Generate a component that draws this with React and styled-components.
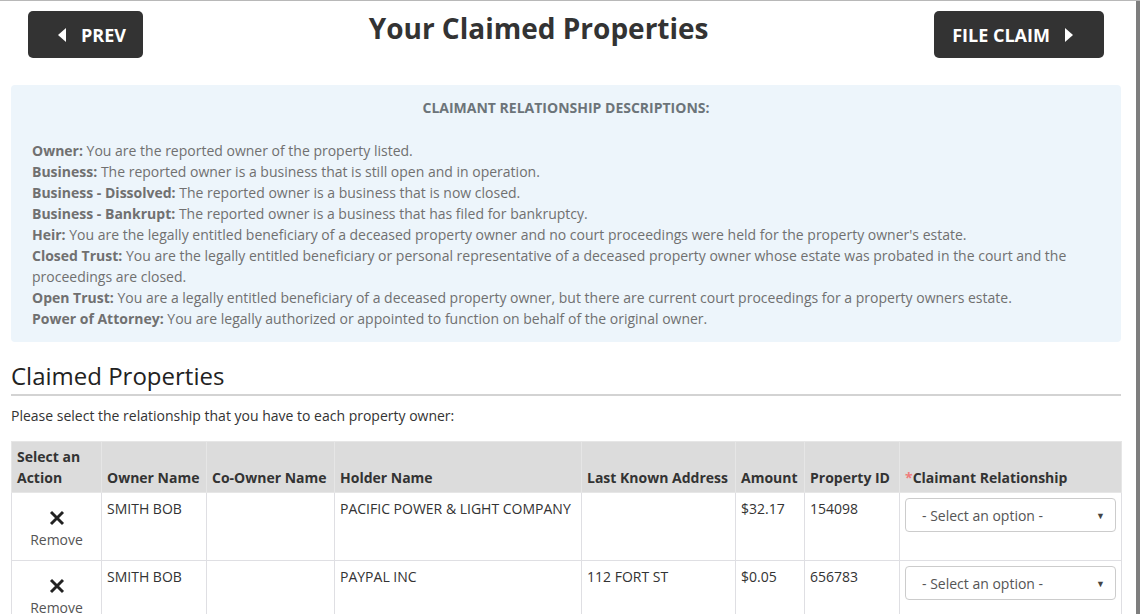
import styled, { createGlobalStyle } from "styled-components";

const GlobalStyle = createGlobalStyle`
  html, body {
    margin: 0;
    padding: 0;
    overflow: hidden;
    background: #fff;
  }
  body {
    font-family: "Open Sans", "Liberation Sans", sans-serif;
    font-size: 14px;
    line-height: 21px;
    color: #333;
  }
`;

const descriptions = [
  ["Owner:", "You are the reported owner of the property listed."],
  ["Business:", "The reported owner is a business that is still open and in operation."],
  ["Business - Dissolved:", "The reported owner is a business that is now closed."],
  ["Business - Bankrupt:", "The reported owner is a business that has filed for bankruptcy."],
  ["Heir:", "You are the legally entitled beneficiary of a deceased property owner and no court proceedings were held for the property owner's estate."],
  ["Closed Trust:", "You are the legally entitled beneficiary or personal representative of a deceased property owner whose estate was probated in the court and the proceedings are closed."],
  ["Open Trust:", "You are a legally entitled beneficiary of a deceased property owner, but there are current court proceedings for a property owners estate."],
  ["Power of Attorney:", "You are legally authorized or appointed to function on behalf of the original owner."],
];

const properties = [
  { owner: "SMITH BOB", coOwner: "", holder: "PACIFIC POWER & LIGHT COMPANY", address: "", amount: "$32.17", id: "154098" },
  { owner: "SMITH BOB", coOwner: "", holder: "PAYPAL INC", address: "112 FORT ST", amount: "$0.05", id: "656783" },
];

const columns = [
  { label: "Select an Action", width: 90 },
  { label: "Owner Name", width: 105 },
  { label: "Co-Owner Name", width: 128 },
  { label: "Holder Name", width: 247 },
  { label: "Last Known Address", width: 154 },
  { label: "Amount", width: 69 },
  { label: "Property ID", width: 95 },
  { label: "Claimant Relationship", width: 222, required: true },
];

function Caret({ dir }) {
  return (
    <svg width="8" height="14" viewBox="0 0 8 14">
      {dir === "left" ? (
        <polygon points="8,0 8,14 0,7" fill="#fff" />
      ) : (
        <polygon points="0,0 0,14 8,7" fill="#fff" />
      )}
    </svg>
  );
}

function CloseIcon() {
  return (
    <svg width="16" height="16" viewBox="0 0 16 16">
      <path d="M2 2 L14 14 M14 2 L2 14" stroke="#222" strokeWidth="2.9" strokeLinecap="butt" />
    </svg>
  );
}

export default function App() {
  return (
    <>
      <GlobalStyle />
      <Frame>
        <Page>
          <Header>
            <NavButton $pad="0 17px 0 30px">
              <Caret dir="left" />
              <span>PREV</span>
            </NavButton>
            <Title>Your Claimed Properties</Title>
            <NavButton $pad="0 31px 0 18px">
              <span>FILE CLAIM</span>
              <Caret dir="right" />
            </NavButton>
          </Header>

          <InfoPanel>
            <InfoHeading>CLAIMANT RELATIONSHIP DESCRIPTIONS:</InfoHeading>
            <DescList>
              {descriptions.map(([term, text]) => (
                <DescLine key={term}>
                  <strong>{term}</strong> {text}
                </DescLine>
              ))}
            </DescList>
          </InfoPanel>

          <SectionTitle>Claimed Properties</SectionTitle>
          <Intro>Please select the relationship that you have to each property owner:</Intro>

          <Table>
            <colgroup>
              {columns.map((c) => (
                <col key={c.label} style={{ width: c.width }} />
              ))}
            </colgroup>
            <thead>
              <tr>
                {columns.map((c) => (
                  <Th key={c.label}>
                    {c.required && <Required>*</Required>}
                    {c.label}
                  </Th>
                ))}
              </tr>
            </thead>
            <tbody>
              {properties.map((p) => (
                <Row key={p.id}>
                  <Td>
                    <RemoveButton>
                      <CloseIcon />
                      <span>Remove</span>
                    </RemoveButton>
                  </Td>
                  <Td>{p.owner}</Td>
                  <Td>{p.coOwner}</Td>
                  <Td>{p.holder}</Td>
                  <Td>{p.address}</Td>
                  <Td>{p.amount}</Td>
                  <Td>{p.id}</Td>
                  <Td>
                    <SelectBox>
                      <span>- Select an option -</span>
                      <Arrow>▼</Arrow>
                    </SelectBox>
                  </Td>
                </Row>
              ))}
            </tbody>
          </Table>
        </Page>
      </Frame>
    </>
  );
}

const Frame = styled.div`
  display: flex;
  height: 100vh;
  border-top: 1px solid #b8b8b8;
  box-sizing: border-box;
`;

const Page = styled.div`
  width: 1110px;
  padding: 0 15px 0 11px;
  border-right: 4px solid #7e7e7e;
`;

const Header = styled.header`
  display: flex;
  justify-content: space-between;
  align-items: flex-start;
  padding: 10px 17px 0;
  height: 74px;
`;

const NavButton = styled.button`
  display: flex;
  align-items: center;
  gap: 15px;
  height: 47px;
  padding: ${(p) => p.$pad};
  border: 0;
  border-radius: 5px;
  background: #333;
  color: #fff;
  font-family: "Open Sans", "Liberation Sans", sans-serif;
  font-size: 18px;
  font-weight: 700;
  cursor: pointer;
`;

const Title = styled.h1`
  margin: 0;
  font-size: 28px;
  line-height: 34px;
  font-weight: 700;
  color: #333;
`;

const InfoPanel = styled.section`
  background: #edf5fb;
  border-radius: 4px;
  padding: 14px 21px 13px;
`;

const InfoHeading = styled.h3`
  margin: 0 0 23px;
  text-align: center;
  font-size: 14px;
  line-height: 18px;
  font-weight: 700;
  color: #6c7479;
`;

const DescList = styled.div`
  color: #707070;
`;

const DescLine = styled.p`
  margin: 0;
  font-size: 14px;
  line-height: 21px;

  strong {
    font-weight: 700;
  }
`;

const SectionTitle = styled.h2`
  margin: 19px 0 0;
  padding-bottom: 3px;
  font-size: 24px;
  line-height: 30px;
  font-weight: 400;
  color: #222;
  border-bottom: 2px solid #d3d3d3;
`;

const Intro = styled.p`
  margin: 9px 0 15px;
  color: #333;
`;

const Table = styled.table`
  width: 1110px;
  table-layout: fixed;
  border-collapse: collapse;
`;

const Th = styled.th`
  background: #dcdcdc;
  border: 1px solid #e6e6e6;
  padding: 4px 5px 4px 5px;
  height: 42px;
  vertical-align: bottom;
  text-align: left;
  font-size: 14px;
  line-height: 21px;
  font-weight: 700;
  color: #333;
`;

const Required = styled.span`
  color: #f07c7c;
`;

const Row = styled.tr`
  height: 68px;
`;

const Td = styled.td`
  border: 1px solid #dfdfe3;
  padding: 5px;
  vertical-align: top;
  font-size: 14px;
  line-height: 21px;
  color: #333;
`;

const RemoveButton = styled.div`
  display: flex;
  flex-direction: column;
  align-items: center;
  gap: 3px;
  padding-top: 12px;
  color: #555;
  cursor: pointer;
`;

const SelectBox = styled.div`
  display: flex;
  align-items: center;
  justify-content: space-between;
  height: 34px;
  box-sizing: border-box;
  padding: 0 10px 0 16px;
  border: 1px solid #ccc;
  border-radius: 4px;
  background: #fff;
  color: #555;
  font-size: 14px;
`;

const Arrow = styled.span`
  font-size: 9px;
  color: #444;
`;
